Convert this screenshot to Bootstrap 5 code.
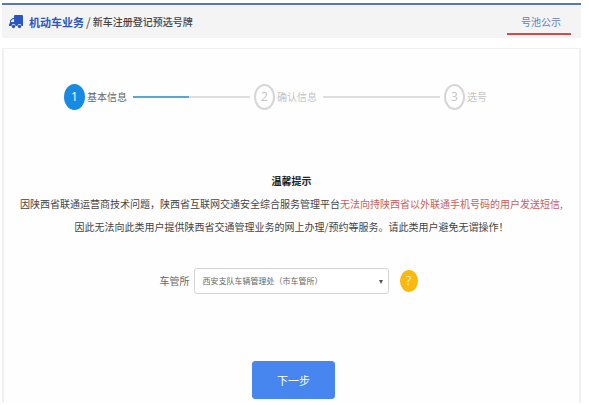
<!DOCTYPE html>
<html lang="zh-CN">
<head>
<meta charset="utf-8">
<meta name="viewport" content="width=device-width, initial-scale=1">
<title>新车注册登记预选号牌</title>
<link href="https://cdn.jsdelivr.net/npm/bootstrap@5.3.0/dist/css/bootstrap.min.css" rel="stylesheet">
<style>
body{font-family:"Noto Sans CJK SC",sans-serif;font-size:10px;line-height:22px;color:#444;background:#fff}
.page-wrap{padding:3px 8px 11px 2px;min-height:100vh}
.top-bar{border-top:2px solid #5a77b3;background:#f4f4f4;height:35px;padding:0 10px 0 7px}
.biz{font-size:11px;font-weight:700;color:#2a56bd;margin-left:6px}
.slash{font-size:12px;padding:0 2px}
.page-name{font-weight:500;color:#444}
.pool-link{color:#6381bd;border-bottom:2px solid #d24a4c;padding:3px 10px 0 14px;line-height:22px}
.panel{border:1px solid #f0f0f0;border-width:1px 2px 0;background:#fefefe;margin-top:10px;padding:35px 0 4px}
.steps{margin:0 16% 0 60px;color:#c4c4c4;line-height:26px}
.dot{width:21px;height:26px;border:2px solid #d6d6d6;border-radius:50%;line-height:22px;font-size:12px;font-family:"Open Sans",sans-serif;text-align:center;margin-right:2px}
.step-on .dot{background:#188ae2;border-color:#188ae2;color:#fff}
.step-on{color:#666}
.rail{height:2px;background:#dedede;margin:0 4px 0 6px}
.rail-half{background:linear-gradient(90deg,#55a7d4 48%,#dedede 48%)}
.tips{margin-top:59px;line-height:23px}
.tips h1{font-size:10px;line-height:23px;color:#222}
.warn{color:#c9605c}
.office{margin-top:30px;padding-right:6px}
.office label{color:#666}
.pick{position:relative;width:195px;margin-left:4px}
.pick select{appearance:none;width:100%;height:26px;border:1px solid #d4d4d4;border-radius:3px;background:#fff;color:#666;font-size:8px;padding:0 16px 0 8px}
.pick span{position:absolute;right:6px;top:12px;border:2px solid transparent;border-top:4px solid #555;border-bottom:0;pointer-events:none}
.help{width:18px;height:22px;border:0;border-radius:50%;background:#fbb80f;color:#fff3c8;font:12px/22px "Open Sans",sans-serif;margin-left:11px;padding:0}
.next-btn,.next-btn:hover{width:83px;height:38px;margin-top:67px;background:#4786ef;border-color:#4786ef;border-radius:3px;color:#fff;font-size:11px}
.next-row{padding-left:4px}
</style>
<script src="https://cdn.jsdelivr.net/npm/bootstrap@5.3.0/dist/js/bootstrap.bundle.min.js" defer></script>
</head>
<body>
<div class="page-wrap d-flex flex-column">
<header class="top-bar d-flex align-items-center justify-content-between">
<div class="d-flex align-items-center">
<svg width="14" height="15" viewBox="0 0 14 15" aria-hidden="true"><path fill="#2a56bd" fill-rule="evenodd" d="M6 1h7q1 0 1 1v10h-1.500a2 2 0 0 0-4 0h-2a2 2 0 0 0-4 0H0v-2l1-1V6.500L3.500 4H5V2q0-1 1-1zM2 8h3V5H4L2 7z"/><circle cx="4.500" cy="12.500" r="1.700" fill="#2a56bd"/><circle cx="10.500" cy="12.500" r="1.700" fill="#2a56bd"/></svg>
<span class="biz">机动车业务</span><span class="slash">/</span><span class="page-name">新车注册登记预选号牌</span>
</div>
<a class="pool-link text-decoration-none" href="#">号池公示</a>
</header>
<main class="panel flex-grow-1">
<div class="steps d-flex align-items-center text-nowrap">
<div class="step-on d-flex"><span class="dot">1</span>基本信息</div>
<div class="rail rail-half flex-grow-1"></div>
<div class="d-flex"><span class="dot">2</span>确认信息</div>
<div class="rail flex-grow-1"></div>
<div class="d-flex"><span class="dot">3</span>选号</div>
</div>
<section class="tips text-center">
<h1 class="fw-bold mb-0">温馨提示</h1>
<p class="mb-0">因陕西省联通运营商技术问题，陕西省互联网交通安全综合服务管理平台<span class="warn">无法向持陕西省以外联通手机号码的用户发送短信,</span></p>
<p class="mb-0">因此无法向此类用户提供陕西省交通管理业务的网上办理/预约等服务。请此类用户避免无谓操作！</p>
</section>
<form>
<div class="office d-flex align-items-center justify-content-center">
<label for="office">车管所</label>
<div class="pick"><select id="office"><option>西安支队车辆管理处（市车管所）</option></select><span></span></div>
<button type="button" class="help" aria-label="帮助">?</button>
</div>
<div class="next-row text-center"><button type="button" class="next-btn btn btn-primary p-0">下一步</button></div>
</form>
</main>
</div>
</body>
</html>
